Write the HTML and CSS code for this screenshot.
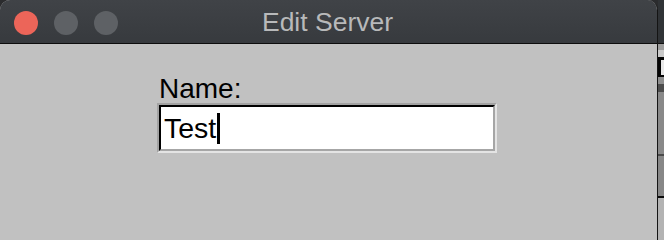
FILE: index.html
```html
<!DOCTYPE html>
<html>
<head>
<meta charset="utf-8">
<link rel="stylesheet" href="styles.css">
</head>
<body>
<div class="screen">
  <div class="window">
    <div class="titlebar">
      <div class="lights">
        <span class="light close"></span>
        <span class="light"></span>
        <span class="light"></span>
      </div>
      <div class="title">Edit Server</div>
      <div class="spacer"></div>
    </div>
    <div class="content">
      <div class="form">
        <label class="label">Name:</label>
        <div class="entry-outer">
          <div class="entry"><span class="value">Test</span><span class="caret"></span></div>
        </div>
      </div>
    </div>
  </div>
  <div class="edge">
    <div class="seg s-top"></div>
    <div class="seg s-line"></div>
    <div class="seg s-check"></div>
    <div class="seg s-light"></div>
    <div class="seg s-black"><span class="s-box"></span></div>
    <div class="seg s-mid"></div>
    <div class="seg s-dark"></div>
    <div class="seg s-gray1"></div>
    <div class="seg s-sep"></div>
    <div class="seg s-gray2"></div>
    <div class="seg s-black2"></div>
    <div class="seg s-bottom"></div>
  </div>
</div>
</body>
</html>
```
FILE: styles.css
```css
html, body {
  margin: 0;
  padding: 0;
  height: 100%;
  background: #2b2c2e;
}
.screen {
  display: flex;
  width: 100%;
  min-width: 664px;
  height: 100vh;
  min-height: 232px;
  overflow: hidden;
  font-family: "Liberation Sans", Arial, sans-serif;
}
.window {
  width: 657px;
  flex: none;
  display: flex;
  flex-direction: column;
  border-right: 1px solid #141414;
  border-radius: 10px 10px 0 0;
  overflow: hidden;
  background: #c1c1c1;
}
.titlebar {
  height: 43px;
  flex: none;
  display: grid;
  grid-template-columns: 1fr auto 1fr;
  align-items: center;
  background: linear-gradient(#404347, #373a3e);
  border-bottom: 1px solid #0d0d0d;
  border-top: 1px solid #55585c;
  box-sizing: content-box;
  margin-top: -1px;
}
.lights {
  display: flex;
  gap: 16px;
  padding-left: 14px;
  align-items: center;
  margin-top: 1px;
}
.light {
  width: 24px;
  height: 24px;
  border-radius: 50%;
  background: #5e6165;
}
.light.close {
  background: #ec6559;
}
.title {
  font-size: 26.5px;
  line-height: 43px;
  color: #b8b9ba;
  margin-top: 1px;
  margin-right: 2px;
}
.content {
  flex: 1;
  padding: 30px 0 0 157px;
}
.form {
  display: flex;
  flex-direction: column;
  align-items: flex-start;
}
.label {
  font-size: 28px;
  line-height: 29px;
  color: #000;
  margin-left: 2px;
}
.entry-outer {
  border: 2px solid;
  border-color: #a2a2a2 #e4e4e4 #e4e4e4 #a2a2a2;
}
.entry {
  width: 329px;
  height: 42px;
  border: 2px solid;
  border-color: #000 #a6a6a6 #a6a6a6 #000;
  background: #fff;
  display: flex;
  align-items: center;
  padding-left: 3px;
  box-sizing: content-box;
}
.value {
  font-size: 28.5px;
  line-height: 42px;
  color: #000;
}
.caret {
  width: 3px;
  height: 31px;
  background: #000;
  margin-left: 1px;
}
.edge {
  width: 6px;
  flex: none;
  display: flex;
  flex-direction: column;
}
.seg { flex: none; }
.s-top { height: 43px; background: #303336; }
.s-line { height: 1px; background: #111; }
.s-check { height: 6px; background: #9d9d9d; }
.s-light { height: 7px; background: #c9c9c9; }
.s-black { height: 20px; background: #050505; display: flex; padding: 3px 0 2px 3px; box-sizing: border-box; }
.s-box { flex: 1; background: #e8e8e8; }
.s-mid { height: 7px; background: #8e8e8e; }
.s-dark { height: 8px; background: #4d4d4d; }
.s-gray1 { height: 62px; background: #898989; }
.s-sep { height: 2px; background: #4a4a4a; }
.s-gray2 { height: 40px; background: #878787; }
.s-black2 { height: 2px; background: #0a0a0a; }
.s-bottom { flex: 1; min-height: 40px; background: #b3b3b3; }
```
